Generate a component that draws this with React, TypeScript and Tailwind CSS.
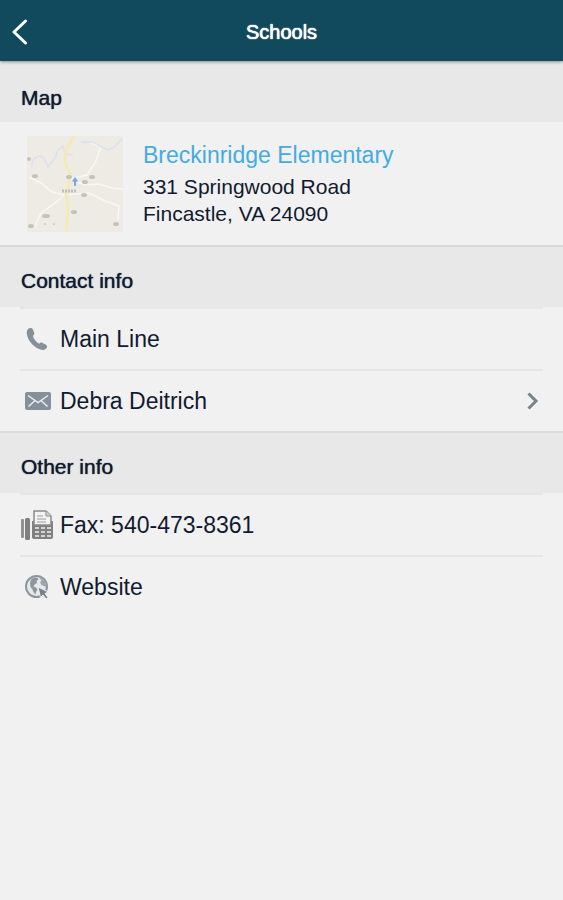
import type { ReactNode } from 'react';

function SectionHeading({ children, first = false }: { children: ReactNode; first?: boolean }) {
  return (
    <h2
      className={`bg-[#e8e8e8] px-[21px] text-[21px] leading-6 font-normal [text-shadow:0_0_1px_currentColor] ${
        first ? 'pt-[25px] pb-3' : 'border-t-2 border-[#d9dbdb] pt-[22px] pb-[14px]'
      }`}
    >
      {children}
    </h2>
  );
}

function Row({ icon, label, href, chevron = false }: { icon: ReactNode; label: string; href: string; chevron?: boolean }) {
  return (
    <li className="px-5">
      <a href={href} className="flex h-[62px] items-center border-t-2 border-[#e5e7e7] text-[23px] leading-7">
        <span className="flex w-10 shrink-0 items-center">{icon}</span>
        <span className="grow">{label}</span>
        {chevron && (
          <svg viewBox="0 0 14 20" className="mr-[3px] h-5 w-3.5" fill="none" stroke="#78848c" strokeWidth="3" aria-hidden="true">
            <path d="M2.5 2.5 10 10 2.5 17.5" />
          </svg>
        )}
      </a>
    </li>
  );
}

function PhoneIcon() {
  return (
    <svg viewBox="0 0 22 24" className="ml-[6px] h-6 w-[22px]" fill="#84919a" aria-hidden="true">
      <path d="M2.2 1.9C3.5.7 5.9.6 6.800 2.300L8.200 5.700C8.600 6.900 8 7.800 6.800 8.900C7.800 12 10 14.800 13.100 16.700C14.300 15.600 15.200 15.300 16.500 15.900L20 17.700C21.700 18.700 21.400 20.500 19.900 21.800C17.900 23.600 14.900 23.200 11.900 21.600C6.200 18.500 1.800 12.700.9 7.200C.6 5.100.8 3.100 2.200 1.900Z" />
    </svg>
  );
}

function MailIcon() {
  return (
    <svg viewBox="0 0 28 20" className="ml-1 h-5 w-7" aria-hidden="true">
      <rect x="1" y="1" width="26" height="18" rx="2" fill="#84919a" />
      <path d="M4 4.500 14 11.500 24 4.500M4.500 15.500 11 9.500M23.500 15.500 17 9.500" fill="none" stroke="#e9eced" strokeWidth="1.500" />
    </svg>
  );
}

function FaxIcon() {
  return (
    <svg viewBox="0 0 34 32" className="h-8 w-[34px]" aria-hidden="true">
      <rect x="1" y="10" width="3" height="19" rx="1" fill="#929292" />
      <rect x="5" y="9" width="5" height="22" rx="1.500" fill="#7f7f7f" />
      <path d="M12 12h21v16q0 2-2 2H14q-2 0-2-2Z" fill="#808080" />
      <path d="M14 2h12l5 5v9H14Z" fill="#f3f3f3" stroke="#8b8b8b" strokeWidth="1.500" />
      <path d="M26 2v5h5" fill="#d5d5d5" stroke="#8b8b8b" />
      <path d="M17 7h6M17 10h9M17 13h9" stroke="#9b9b9b" strokeWidth="1" />
      <path d="M15 18h4v2h-4zM21 18h4v2h-4zM27 18h4v2h-4zM15 22h4v2h-4zM21 22h4v2h-4zM27 22h4v2h-4zM15 26h4v2h-4zM21 26h4v2h-4zM27 26h4v2h-4z" fill="#d4d4d4" />
    </svg>
  );
}

function GlobeIcon() {
  return (
    <svg viewBox="0 0 26 26" className="ml-1 h-[26px] w-[26px]" aria-hidden="true">
      <circle cx="12.500" cy="12.500" r="10.500" fill="#e6e9ea" stroke="#8b969e" strokeWidth="2" />
      <path d="M7 5.500C9 3.600 11 3.200 13 3.500L14.500 5.500 12.500 7 13 9 10.500 10.500 9.500 12.500 12 13.500 13.500 15.500 12 18 11.500 20.500 9.500 18 8.500 15.500 6.500 13 6 9Z" fill="#8b969e" />
      <path d="M15.500 4 18 4.500 21 8 22.500 13 20 12 17.500 11 16 8.500 17.500 6.500Z" fill="#9ba5ab" />
      <path d="M14 13 24.500 18 21 19.500 24 23.500 22 25 19 21 16.500 23.500Z" fill="#76828a" stroke="#f1f1f1" strokeWidth="1" />
    </svg>
  );
}

function MapThumbnail() {
  return (
    <svg viewBox="0 0 96 96" className="size-24 shrink-0" role="img" aria-label="Map of Fincastle">
      <rect width="96" height="96" fill="#eeebe5" />
      <g fill="none" stroke="#f8f7f3" strokeWidth="1.500">
        <path d="M2 41 14 47 25 56 38 59 62 57 76 64 92 70" />
        <path d="M43 43 58 49 72 48 85 52 96 53" />
        <path d="M42 43 60 39 68 27 74 11 63 6M39 58 24 70 14 77 7 92M92 69 91 84" />
      </g>
      <path d="M5 33C3 22 12 18 17 22L21 31 28 22 31 14 36 10 38 18 46 19M54 6 66 6 80 14 86 12 96 2" fill="none" stroke="#dde1ee" strokeWidth="1.500" />
      <path d="M47 0C41 10 37 16 38 26L43 38 42 48 39 58 41 72 39 95" fill="none" stroke="#f4e9b8" strokeWidth="3" />
      <g fill="#c3c3be">
        <ellipse cx="2" cy="23" rx="2" ry="2" />
        <ellipse cx="8" cy="40" rx="3" ry="2" />
        <ellipse cx="42" cy="41" rx="3" ry="2" />
        <ellipse cx="65" cy="41" rx="3" ry="2" />
        <ellipse cx="58" cy="46" rx="3" ry="2" />
        <ellipse cx="57" cy="59" rx="3" ry="2" />
        <ellipse cx="47" cy="76" rx="3" ry="2" />
        <ellipse cx="19" cy="80" rx="4" ry="2" />
        <ellipse cx="4" cy="90" rx="3" ry="2" />
        <ellipse cx="89" cy="88" rx="3" ry="2" />
      </g>
      <path d="M35 55h14" stroke="#c0bfba" strokeWidth="3" strokeDasharray="2 1" />
      <path d="M48 41 51 45 49 46 49 50 47 50 47 46 45 45Z" fill="#7ba7e8" />
      <path d="M17 88h2M26 88h2" stroke="#cccbc5" strokeWidth="1.500" />
    </svg>
  );
}

export default function App() {
  return (
    <div className="min-h-screen bg-[#f1f1f1] font-['Liberation_Sans',Arial,sans-serif] text-[#111a30]">
      <header className="relative grid h-[61px] grid-cols-[1fr_auto_1fr] items-center bg-[#11495d] text-white shadow-[0_1px_3px_#00000066]">
        <button type="button" aria-label="Back" className="flex h-full w-12 items-center pt-[2px] pl-[11px]">
          <svg viewBox="0 0 17 26" className="h-[26px] w-[17px]" fill="none" stroke="currentColor" strokeWidth="3" strokeLinecap="round" strokeLinejoin="round" aria-hidden="true">
            <path d="M14.500 2 3 13 14.500 24" />
          </svg>
        </button>
        <h1 className="pt-[2px] text-[20px] leading-6 [text-shadow:0_0_1px_currentColor,0_0_1px_currentColor]">Schools</h1>
      </header>

      <main>
        <section>
          <SectionHeading first>Map</SectionHeading>
          <a href="#map" className="flex h-[123px] items-center gap-5 px-[27px]">
            <MapThumbnail />
            <span className="flex flex-col text-[21px] leading-[27px]">
              <span className="mb-1 text-[23px] leading-7 text-[#43ace0]">Breckinridge Elementary</span>
              <span>331 Springwood Road</span>
              <span>Fincastle, VA 24090</span>
            </span>
          </a>
        </section>

        <section>
          <SectionHeading>Contact info</SectionHeading>
          <ul>
            <Row icon={<PhoneIcon />} label="Main Line" href="#main-line" />
            <Row icon={<MailIcon />} label="Debra Deitrich" href="#debra-deitrich" chevron />
          </ul>
        </section>

        <section>
          <SectionHeading>Other info</SectionHeading>
          <ul>
            <Row icon={<FaxIcon />} label="Fax: 540-473-8361" href="#fax" />
            <Row icon={<GlobeIcon />} label="Website" href="#website" />
          </ul>
        </section>
      </main>
    </div>
  );
}
